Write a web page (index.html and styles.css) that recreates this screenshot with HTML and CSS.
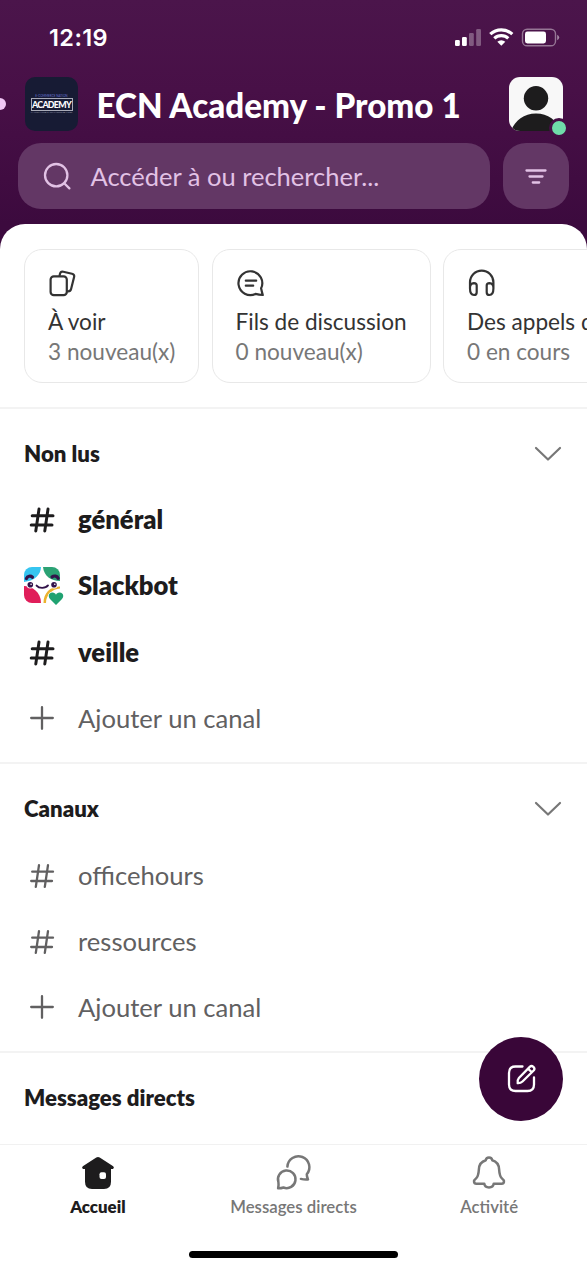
FILE: index.html
```
<!DOCTYPE html>
<html lang="fr">
<head>
<meta charset="utf-8">
<title>ECN Academy - Promo 1</title>
<link rel="stylesheet" href="styles.css">
</head>
<body>
<svg class="defs" width="0" height="0" aria-hidden="true">
  <symbol id="hash" viewBox="0 0 36 36"><path d="M15 8.1 11.8 29.9M24 8.1 20.8 29.9M8.2 14.7H29M7.2 24H28"/></symbol>
  <symbol id="plus" viewBox="0 0 36 36"><path d="M18 7.2V28.8M7.2 18H28.8"/></symbol>
  <symbol id="chevron" viewBox="0 0 28 18"><path d="M2 3 14 14.5 26 3"/></symbol>
</svg>
<div class="app">
  <header class="header">
    <div class="status">
      <span class="clock">12:19</span>
      <svg class="status-icons" width="106" height="20" viewBox="0 0 106 20">
        <g fill="#fff"><rect x="1" y="12" width="4.8" height="6" rx="1.3"/><rect x="8" y="9" width="4.8" height="9" rx="1.3"/>
        <g opacity=".3"><rect x="15" y="5" width="4.8" height="13" rx="1.3"/><rect x="22.2" y="1" width="4.8" height="17" rx="1.3"/></g></g>
        <g fill="none" stroke="#fff" stroke-width="3.2"><path d="M36.3 6.2A16 16 0 0 1 58.3 6.2"/><path d="M40.3 10.4A10.3 10.3 0 0 1 54.3 10.4"/></g>
        <path d="M43.3 13.7A5.9 5.9 0 0 1 51.3 13.7L47.3 17.8Z" fill="#fff"/>
        <rect x="68.5" y="1.2" width="33" height="16.6" rx="4.6" fill="none" stroke="#fff" stroke-opacity=".42" stroke-width="1.4"/>
        <rect x="71" y="3.6" width="21" height="11.8" rx="2.4" fill="#fff"/>
        <path d="M103.2 6.8Q105.2 7.7 105.2 9.5T103.2 12.2Z" fill="#fff" opacity=".5"/>
      </svg>
    </div>
    <div class="workspace">
      <span class="edge-dot"></span>
      <div class="logo"><span class="logo-top">E-COMMERCE NATION</span><span class="logo-name">ACADEMY</span><span class="logo-bottom">LA FORMATION E-COMMERCE EN LIGNE</span></div>
      <h1 class="title">ECN Academy - Promo 1</h1>
      <div class="avatar">
        <svg width="54" height="54" viewBox="0 0 54 54"><rect width="54" height="54" fill="#f8f8f8"/><circle cx="27" cy="21.3" r="12.2" fill="#1d1c1d"/><path d="M2 54C6 43 15 36.5 27 36.5S48 43 52 54Z" fill="#1d1c1d"/></svg>
        <span class="presence"></span>
      </div>
    </div>
    <div class="search-row">
      <div class="search">
        <svg width="30" height="30" viewBox="0 0 30 30" class="line lilac"><circle cx="13.2" cy="14.2" r="11.2"/><path d="M21.2 22.2 26.4 27.4"/></svg>
        <span>Accéder à ou rechercher...</span>
      </div>
      <div class="filter">
        <svg width="24" height="18" viewBox="0 0 24 18" class="line lilac"><path d="M2.5 3.5H21.5M5.5 9.5H18.5M8.8 15.5H15.2"/></svg>
      </div>
    </div>
  </header>

  <main class="sheet">
    <div class="cards">
      <article class="card card-a">
        <svg class="line dark" width="28" height="28" viewBox="0 0 28 28"><rect x="2.6" y="7.4" width="16.2" height="18.8" rx="3.2"/><path d="M11.6 6.5 12 4.7Q12.7 2.1 15.3 2.7L24 4.7Q26.7 5.4 26.1 8L23.1 20.1Q22.4 22.7 19.6 22.4"/></svg>
        <strong>À voir</strong><span>3 nouveau(x)</span>
      </article>
      <article class="card card-b">
        <svg class="line dark" width="28" height="28" viewBox="0 0 28 28"><path d="M19.5 24.9A11.9 11.9 0 1 1 25.1 19.3Q25.7 22.5 26.8 26 23 25.7 19.5 24.9ZM9.8 11.7H20.2M9.8 16.7H17.2"/></svg>
        <strong>Fils de discussion</strong><span>0 nouveau(x)</span>
      </article>
      <article class="card card-c">
        <svg class="line dark" width="28" height="28" viewBox="0 0 28 28"><path d="M3 19V13.3A11.7 11.7 0 0 1 26.4 13.3V19M3 18.4Q3 14.4 6.9 14.1 9.7 14.1 9.7 16.6V23.2Q9.7 26 7 26 3 25.8 3 19.4ZM26.4 18.4Q26.4 14.4 22.5 14.1 19.7 14.1 19.7 16.6V23.2Q19.7 26 22.4 26 26.4 25.8 26.4 19.4Z"/></svg>
        <strong>Des appels d’équipe</strong><span>0 en cours</span>
      </article>
    </div>

    <section class="section">
      <div class="section-head"><h2>Non lus</h2><svg class="chev" width="28" height="18"><use href="#chevron"/></svg></div>
      <div class="row unread"><svg class="ico" width="36" height="36"><use href="#hash"/></svg><span>général</span></div>
      <div class="row unread">
        <div class="bot">
          <svg width="40" height="40" viewBox="0 0 40 40">
            <clipPath id="bot-clip"><rect x="0" y="1" width="36" height="36" rx="8"/></clipPath>
            <g clip-path="url(#bot-clip)">
              <path d="M0 1H17C17 8 11 15 0 16Z" fill="#36c5f0"/>
              <path d="M19 1H36V15C27 15 20 10 19 1Z" fill="#2ba274"/>
              <path d="M0 20C8 20 17 26 17 37H0Z" fill="#e01e5a"/>
              <path d="M19.5 37C19.5 27 26 20.5 36 20.5V22.5C28 23 22 29 22 37Z" fill="#ecb22e"/>
            </g>
            <g fill="none" stroke="#33134a" stroke-linecap="round"><path d="M2.4 12.6C3.4 10 6.5 9.5 8.5 11.3M28 11C30 9.2 33.3 10 34.2 12.3" stroke-width="3.2"/><path d="M12.6 19.6C15 22.6 21.5 22.6 24 19.4" stroke-width="1.9"/></g>
            <circle cx="6.3" cy="18.8" r="3.8" fill="#fff"/><circle cx="30" cy="18.8" r="3.8" fill="#fff"/>
            <circle cx="6.3" cy="18.8" r="2.8" fill="#33134a"/><circle cx="30" cy="18.8" r="2.8" fill="#33134a"/>
            <circle cx="7.1" cy="18.2" r=".8" fill="#fff"/><circle cx="30.8" cy="18.2" r=".8" fill="#fff"/>
            <path d="M32 39 26 33.1C23.4 30 25.2 26.6 28.4 26.6 30.3 26.6 31.4 27.6 32 28.7 32.6 27.6 33.7 26.6 35.6 26.6 38.8 26.6 40.6 30 38 33.1Z" fill="#20a271" stroke="#fff" stroke-width="1.6" paint-order="stroke"/>
          </svg>
        </div>
        <span>Slackbot</span></div>
      <div class="row unread"><svg class="ico" width="36" height="36"><use href="#hash"/></svg><span>veille</span></div>
      <div class="row"><svg class="ico" width="36" height="36"><use href="#plus"/></svg><span>Ajouter un canal</span></div>
    </section>

    <section class="section">
      <div class="section-head"><h2>Canaux</h2><svg class="chev" width="28" height="18"><use href="#chevron"/></svg></div>
      <div class="row"><svg class="ico" width="36" height="36"><use href="#hash"/></svg><span>officehours</span></div>
      <div class="row"><svg class="ico" width="36" height="36"><use href="#hash"/></svg><span>ressources</span></div>
      <div class="row"><svg class="ico" width="36" height="36"><use href="#plus"/></svg><span>Ajouter un canal</span></div>
    </section>

    <section class="section">
      <div class="section-head"><h2>Messages directs</h2></div>
    </section>
  </main>

  <button class="compose" aria-label="Nouveau message">
    <svg class="line" width="32" height="32" viewBox="0 0 32 32"><path d="M17.5 3.5H10.5Q4 3.5 4 10V21.5Q4 28 10.5 28H22.5Q29 28 29 21.5V14.5"/><path d="M12.7 20.2Q12.2 17 13.9 15L25 3.6Q26.5 2.3 28.4 3.8 30.2 5.5 28.9 7.2L17.5 18.5Q15.5 20.4 12.7 20.2ZM23 5.6 26.8 9.3"/></svg>
  </button>

  <nav class="tabs">
    <div class="tab active">
      <svg width="36" height="36" viewBox="0 0 36 36"><path d="M16.3 2.6Q18 1.4 19.7 2.6L33.2 11.3Q34.8 12.9 33 14.1H31V26.7Q31 34 24 34H12Q5 34 5 26.7V14.1H3Q1.2 12.9 2.8 11.3Z" fill="#1d1c1d"/><rect x="19.5" y="17.3" width="6.5" height="6.8" rx="2" fill="#fff"/></svg>
      <span>Accueil</span>
    </div>
    <div class="tab">
      <svg class="line gray" width="36" height="36" viewBox="0 0 36 36"><path d="M3.1 33.3Q3.9 29.8 3.4 27.2A8.8 8.8 0 1 1 8.5 32.5Q5.9 33.4 3.1 33.3ZM12.4 11.6A11 11 0 1 1 31.8 19.3Q31.7 21.5 33 24.4 29.2 24.7 25.9 23.9"/></svg>
      <span>Messages directs</span>
    </div>
    <div class="tab">
      <svg class="line gray" width="36" height="36" viewBox="0 0 36 36"><path d="M14.8 5.2C15.2 1.6 20.8 1.6 21.2 5.2C25.6 6.5 27.9 10 28.1 14.2C28.4 19.2 29 21.7 31 23.4C34 25.5 33.3 28.7 30.7 28.7H22.7C22 33.8 14 33.8 13.3 28.7H5.3C2.7 28.7 2 25.5 5 23.4C7 21.7 7.6 19.2 7.9 14.2C8.1 10 10.4 6.5 14.8 5.2Z"/></svg>
      <span>Activité</span>
    </div>
  </nav>
  <div class="home-indicator"></div>
</div>
</body>
</html>
```
FILE: styles.css
```
* { box-sizing: border-box; }
body { margin: 0; font-family: Lato, sans-serif; color: #1d1c1d; background: #fff; }
h1, h2 { margin: 0; }
svg { display: block; flex: none; }
.defs { position: absolute; }
.app { position: relative; width: 587px; height: 1270px; overflow: hidden; display: flex; flex-direction: column; }
.line { fill: none; stroke: currentColor; stroke-width: 2.3; stroke-linecap: round; stroke-linejoin: round; }
.lilac { color: #e2c2e5; }
.dark { color: #333; stroke-width: 2.2; }
.gray { color: #777; stroke-width: 2.5; }

.header { flex: none; height: 254px; background: linear-gradient(#4b154b 0, #481047 90px, #3c0a3e 224px); color: #fff; }
.status { height: 77px; padding: 0 27px 0 49px; display: flex; align-items: center; justify-content: space-between; }
.clock { font: 600 23.5px/30px Inter, sans-serif; letter-spacing: .4px; margin-top: -1px; }
.status-icons { margin-top: -2px; }
.workspace { position: relative; display: flex; align-items: center; height: 54px; padding: 0 24px 0 25px; }
.edge-dot { position: absolute; left: -6px; top: 21px; width: 12px; height: 12px; border-radius: 50%; background: #f0c6f5; }
.logo { width: 53px; height: 54px; border-radius: 10px; background: #171b34; display: flex; flex-direction: column; align-items: center; justify-content: center; }
.logo-top { font-size: 3px; line-height: 3px; color: #6672cf; white-space: nowrap; }
.logo-name { border: 1px solid #a9abb8; width: 42px; height: 13px; display: flex; justify-content: center; font-size: 8.8px; line-height: 11px; font-weight: 900; letter-spacing: -.7px; white-space: nowrap; }
.logo-bottom { font-size: 2.2px; line-height: 3px; color: #8c8ea2; white-space: nowrap; }
.title { margin-left: 18.5px; padding-top: 2px; font-size: 33.2px; line-height: 54px; font-weight: 900; white-space: nowrap; }
.avatar { position: relative; margin-left: auto; width: 54px; height: 54px; }
.avatar svg { border-radius: 11px; }
.presence { position: absolute; left: 39.5px; top: 40.5px; width: 20px; height: 20px; border-radius: 50%; background: #6fdcaa; border: 3.5px solid #450e45; }
.search-row { display: flex; gap: 13px; padding: 12px 18px 0; }
.search { width: 472px; height: 66px; border-radius: 23px; background: #633765; display: flex; align-items: center; padding-left: 25px; gap: 17.5px; color: #e2c2e5; font-size: 25.5px; }
.filter { width: 66px; height: 66px; border-radius: 23px; background: #633765; display: flex; align-items: center; justify-content: center; }

.sheet { flex: 1; min-height: 0; overflow: hidden; margin-top: -30px; background: #fff; border-radius: 25px 25px 0 0; }
.cards { display: flex; gap: 12.5px; padding: 25px 0 24px 24px; }
.card { flex: none; height: 134px; border: 1.5px solid #e8e8e8; border-radius: 18px; padding: 19px 0 0 23px; display: flex; flex-direction: column; white-space: nowrap; }
.card strong { margin-top: 10px; font-size: 22.6px; line-height: 30px; font-weight: 400; color: #333; }
.card span { font-size: 22.6px; line-height: 30px; color: #777; }
.card-a { width: 175px; }
.card-b { width: 219px; }
.card-c { width: 260px; }
.section { border-top: 2px solid #f3f3f3; padding: 11px 24px 11.4px; }
.section-head { height: 66.2px; display: flex; align-items: center; justify-content: space-between; padding: 1px 1px 0 0; }
.section h2 { font-size: 22.2px; line-height: 30px; font-weight: 800; }
.chev { fill: none; stroke: #777; stroke-width: 2.2; stroke-linecap: round; stroke-linejoin: round; }
.row { height: 66.2px; display: flex; align-items: center; gap: 18px; font-size: 25.6px; color: #616061; }
.row .ico { fill: none; stroke: currentColor; stroke-width: 2.3; stroke-linecap: round; }
.row.unread { color: #1d1c1d; font-weight: 800; }
.row.unread .ico { stroke-width: 3; }
.bot { width: 36px; height: 38px; }

.compose { position: absolute; left: 478.5px; top: 1036.5px; width: 84.5px; height: 84.5px; padding: 0; border: 0; border-radius: 50%; background: #390638; color: #fff; display: flex; align-items: center; justify-content: center; }
.tabs { flex: none; height: 126px; background: #fff; border-top: 1.5px solid #f1f1f1; display: grid; grid-template-columns: repeat(3, 1fr); align-items: start; padding-top: 9.5px; }
.tab { display: flex; flex-direction: column; align-items: center; gap: 4.5px; font-size: 16.8px; line-height: 24px; color: #777; font-weight: 600; }
.tab svg { overflow: visible; }
.tab.active { color: #1d1c1d; font-weight: 800; }
.home-indicator { position: absolute; left: 189px; top: 1251px; width: 209px; height: 7px; border-radius: 4px; background: #000; }
```
